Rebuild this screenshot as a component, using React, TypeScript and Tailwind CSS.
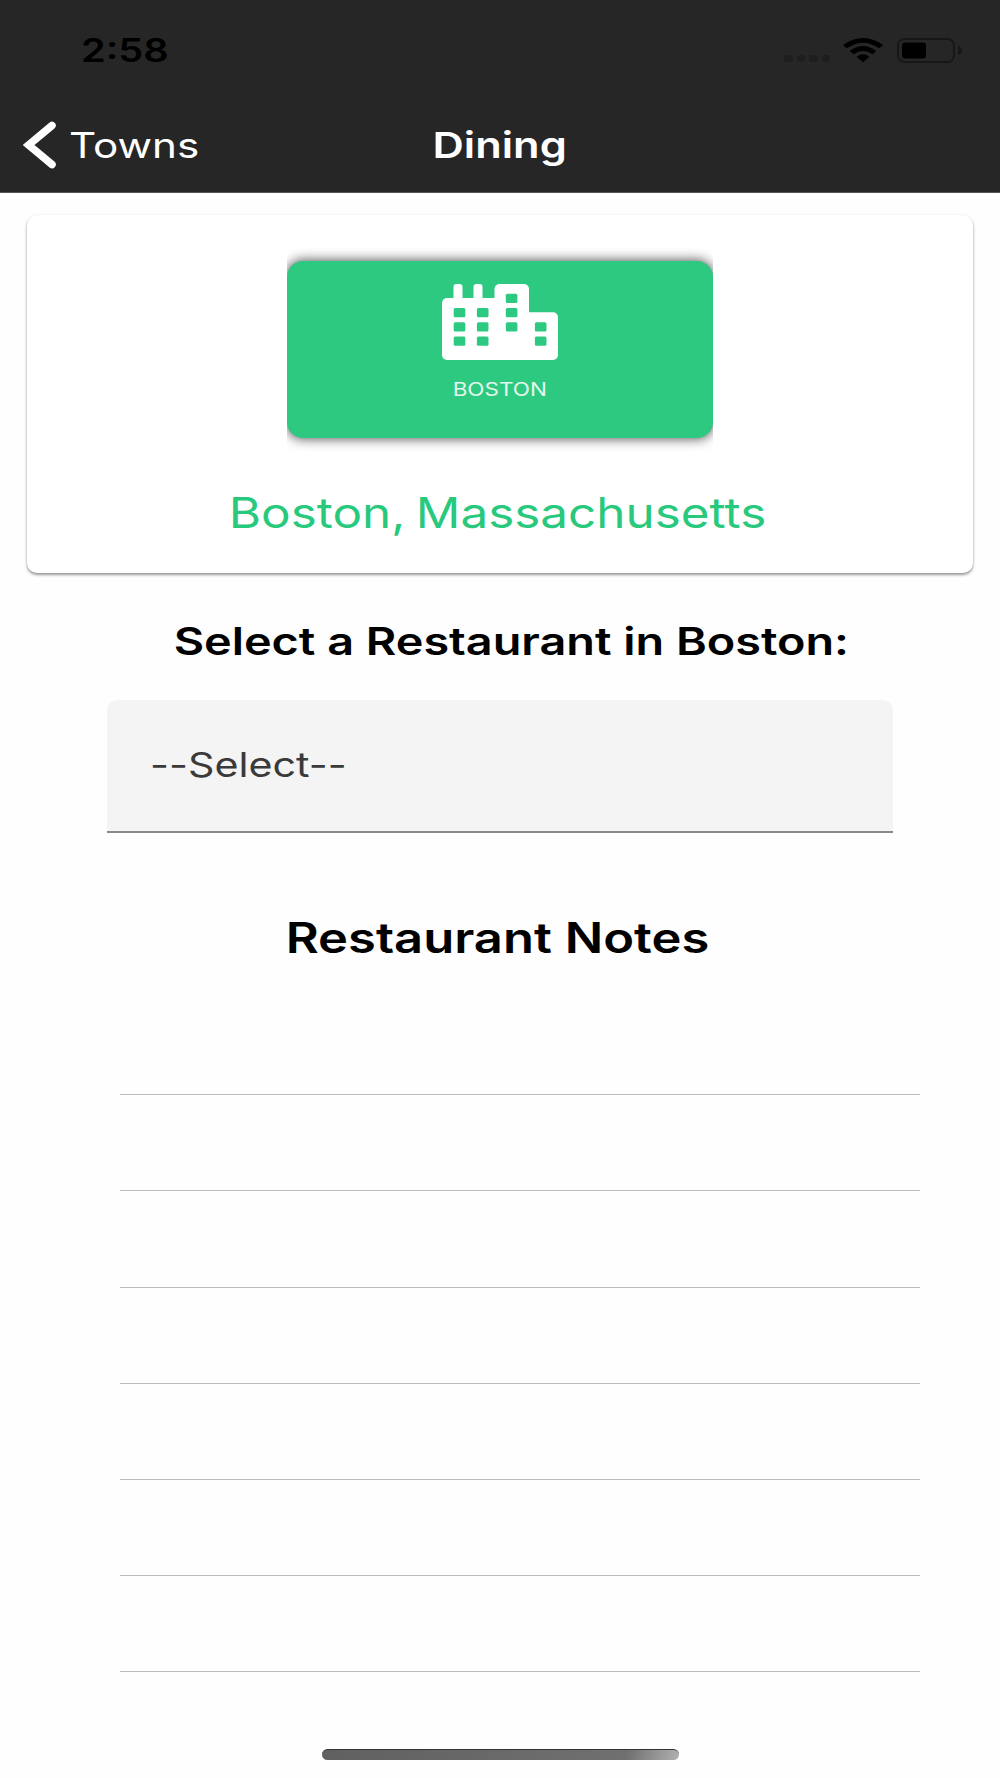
import React from "react";

const noteLines = [1, 2, 3, 4, 5, 6, 7];

const StatusBar = () => {
  return (
    <div className="flex h-[100px] items-start justify-between pl-[81px] pr-[37px]">
      <span className="mt-[35px] origin-left scale-x-[1.24] text-[32px] font-semibold leading-none text-black">
        2:58
      </span>
      <div className="mt-[37px] flex h-[26px] items-start">
        <div className="mt-[18px] flex gap-[4px]">
          <span className="h-[7px] w-[8.5px] rounded-[3px] bg-[#1e1e1e]" />
          <span className="h-[7px] w-[8.5px] rounded-[3px] bg-[#1e1e1e]" />
          <span className="h-[7px] w-[8.5px] rounded-[3px] bg-[#1e1e1e]" />
          <span className="h-[7px] w-[8.5px] rounded-[3px] bg-[#1e1e1e]" />
        </div>
        <svg
          className="ml-[13px] mt-[1px] h-[25px] w-[40px]"
          viewBox="0 0 40 25"
          fill="black"
        >
          <path d="M0 7 Q20 -7 40 7 L36.2 10.3 Q20 -1 3.8 10.3 Z" />
          <path d="M6.8 13 Q20 3 33.2 13 L29.4 16.3 Q20 9.5 10.6 16.3 Z" />
          <path d="M13.5 18.7 Q20 14 26.5 18.7 L20 24.3 Z" />
        </svg>
        <svg
          className="ml-[14px] h-[26px] w-[66px]"
          viewBox="0 0 66 26"
          fill="none"
        >
          <rect x="1" y="2" width="56" height="23" rx="6.5" stroke="#171717" strokeWidth="2" />
          <rect x="5" y="5.500" width="24" height="16" rx="3" fill="black" />
          <path d="M61 9 Q65 10.500 65 13.500 Q65 16.500 61 18 Z" fill="#171717" />
        </svg>
      </div>
    </div>
  );
};

const Header = () => {
  return (
    <header className="h-[193px] border-b border-[#555] bg-[#262626]">
      <StatusBar />
      <div className="grid grid-cols-3 items-start text-white">
        <div className="flex items-start pl-[23px]">
          <svg className="mt-[21px] h-[48px] w-[34px]" viewBox="0 0 34 48" fill="none">
            <path
              d="M29 4.500 L5.500 24 L29 43.500"
              stroke="white"
              strokeWidth="7.500"
              strokeLinecap="round"
              strokeLinejoin="miter"
            />
          </svg>
          <span className="ml-[12px] mt-[28px] origin-left scale-x-[1.205] text-[35px] leading-none">
            Towns
          </span>
        </div>
        <h1 className="mt-[27px] scale-x-[1.205] text-center text-[36px] font-semibold leading-none">
          Dining
        </h1>
      </div>
    </header>
  );
};

const CityIcon = () => {
  return (
    <svg className="h-[76px] w-[116px]" viewBox="0 0 116 76">
      <g fill="white">
        <rect x="11.500" y="0" width="9" height="22" rx="3" />
        <rect x="31.500" y="0" width="9" height="22" rx="3" />
        <rect x="0" y="14" width="60" height="62" rx="5" />
        <rect x="52.500" y="0" width="34.500" height="76" rx="5" />
        <rect x="60" y="28.300" width="56" height="47.700" rx="5" />
      </g>
      <g fill="#2ec981">
        <rect x="11.700" y="24" width="11.600" height="9.300" rx="1.500" />
        <rect x="11.700" y="38.200" width="11.600" height="9.300" rx="1.500" />
        <rect x="11.700" y="52.500" width="11.600" height="9.300" rx="1.500" />
        <rect x="34.900" y="24" width="11.600" height="9.300" rx="1.500" />
        <rect x="34.900" y="38.200" width="11.600" height="9.300" rx="1.500" />
        <rect x="34.900" y="52.500" width="11.600" height="9.300" rx="1.500" />
        <rect x="63.800" y="9.700" width="11.600" height="9.300" rx="1.500" />
        <rect x="63.800" y="24" width="11.600" height="9.300" rx="1.500" />
        <rect x="63.800" y="38.200" width="11.600" height="9.300" rx="1.500" />
        <rect x="92.900" y="38.200" width="11.600" height="9.300" rx="1.500" />
        <rect x="92.900" y="52.500" width="11.600" height="9.300" rx="1.500" />
      </g>
    </svg>
  );
};

const TownCard = () => {
  return (
    <section className="mx-[27px] mt-[22px] flex h-[358px] flex-col items-center rounded-[10px] bg-white shadow-[0_2px_3px_rgba(0,0,0,0.4),0_0_3px_rgba(0,0,0,0.05)]">
      <div className="mt-[31px] overflow-hidden py-[15px]">
        <button className="flex h-[177px] w-[426px] flex-col items-center rounded-[16px] bg-[#2ec981] pt-[23px] shadow-[0_0_12px_1px_rgba(0,0,0,0.65)]">
          <CityIcon />
          <span className="mt-[20px] scale-x-[1.215] text-[18.500px] leading-none text-[#e4f8ee]">
            BOSTON
          </span>
        </button>
      </div>
      <h2 className="mr-[4px] mt-[39px] scale-x-[1.176] whitespace-nowrap text-[42px] leading-none text-[#28c97d] [word-spacing:-3px]">
        Boston, Massachusetts
      </h2>
    </section>
  );
};

const App = () => {
  return (
    <main className="flex h-[1778px] w-[1000px] flex-col overflow-hidden bg-[#fefefe] font-['Inter',sans-serif]">
      <Header />
      <TownCard />
      <div className="flex flex-col items-center">
        <h3 className="ml-[23px] mt-[49px] scale-x-[1.231] whitespace-nowrap text-[38px] font-semibold leading-none text-black">
          Select a Restaurant in Boston:
        </h3>
        <div className="mt-[40px] flex h-[133px] w-[786px] items-start rounded-t-[10px] border-b-2 border-[#8a8a8a] bg-[#f4f4f4] pl-[43px]">
          <span className="mt-[48px] origin-left scale-x-[1.213] text-[34px] leading-none text-[#3a3a3a] [font-feature-settings:'calt'_0]">
            --Select--
          </span>
        </div>
        <h3 className="mr-[6px] mt-[84px] scale-x-[1.207] whitespace-nowrap text-[42px] font-semibold leading-none text-black">
          Restaurant Notes
        </h3>
      </div>
      <div className="ml-[120px] mt-[40px] w-[800px]">
        {noteLines.map((line) => (
          <div key={line} className="h-[96.200px] border-b border-[#bcbcbc]" />
        ))}
      </div>
      <div className="mx-auto mt-[77px] h-[11px] w-[357px] rounded-full border-t border-[#333] bg-[linear-gradient(100deg,#606060_0%,#707070_85%,#b0b0b0_100%)]" />
    </main>
  );
};

export default App;
